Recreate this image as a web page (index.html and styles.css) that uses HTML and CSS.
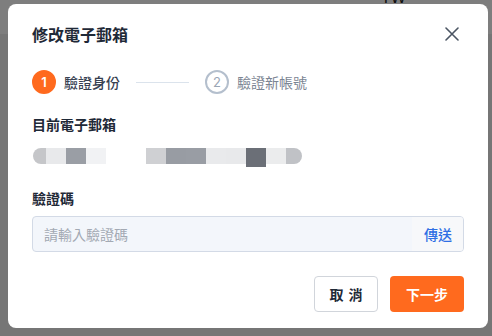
FILE: index.html
```html
<!DOCTYPE html>
<html lang="zh-Hant">
<head>
<meta charset="utf-8">
<link rel="stylesheet" href="styles.css">
</head>
<body>
<div class="page">
  <div class="page-header"><span class="page-tw">TW</span></div>
  <div class="page-rest"></div>
</div>
<div class="overlay">
  <div class="modal">
    <div class="modal-header">
      <h2 class="modal-title">修改電子郵箱</h2>
      <button class="close-btn" aria-label="close">
        <svg width="14" height="14" viewBox="0 0 14 14"><path d="M1 1L13 13M13 1L1 13" stroke="#4b5563" stroke-width="1.6" stroke-linecap="round"/></svg>
      </button>
    </div>
    <div class="modal-body">
      <div class="steps">
        <div class="step active"><span class="step-num">1</span><span class="step-text">驗證身份</span></div>
        <div class="step-line"></div>
        <div class="step"><span class="step-num">2</span><span class="step-text">驗證新帳號</span></div>
      </div>
      <div class="label first">目前電子郵箱</div>
      <div class="masked">
        <span class="b b1"></span><span class="b b2"></span><span class="b b3"></span><span class="b b4"></span><span class="gap"></span><span class="b b5"></span><span class="b b6"></span><span class="b b7"></span><span class="b b8"></span><span class="b b9"></span><span class="b b10"></span><span class="b b11"></span><span class="b b12"></span>
      </div>
      <div class="label second">驗證碼</div>
      <div class="input">
        <span class="placeholder">請輸入驗證碼</span>
        <span class="suffix">傳送</span>
      </div>
    </div>
    <div class="modal-footer">
      <button class="btn btn-default">取 消</button>
      <button class="btn btn-primary">下一步</button>
    </div>
  </div>
</div>
</body>
</html>
```
FILE: styles.css
```css
* { box-sizing: border-box; }
html, body { margin: 0; padding: 0; }
body {
  width: 492px;
  height: 336px;
  overflow: hidden;
  font-family: "Noto Sans CJK TC", "Noto Sans", sans-serif;
  position: relative;
}
.page { width: 492px; height: 336px; display: flex; flex-direction: column; }
.page-header { height: 34px; background: #fdfdfd; position: relative; }
.page-tw { position: absolute; left: 381px; top: -10px; font-size: 16px; line-height: 16px; font-family: "Liberation Sans", sans-serif; color: #222; }
.page-rest { flex: 1; background: #ededed; }
.overlay {
  position: absolute;
  inset: 0;
  background: rgba(0, 0, 0, 0.5);
  padding: 4px 4px 0 8px;
}
.modal {
  width: 480px;
  height: 324px;
  background: #fff;
  border-radius: 8px;
  display: flex;
  flex-direction: column;
}
.modal-header {
  height: 60px;
  padding: 0 24px;
  display: flex;
  align-items: center;
  justify-content: space-between;
}
.modal-title {
  margin: 0;
  font-size: 16px;
  font-weight: 700;
  color: #1f2937;
  line-height: 24px;
}
.close-btn {
  width: 24px; height: 24px;
  border: 0; background: none; padding: 0;
  display: flex; align-items: center; justify-content: center;
}
.modal-body { padding: 0 24px; display: flex; flex-direction: column; }
.steps { display: flex; align-items: center; height: 24px; margin-top: 6px; }
.step { display: flex; align-items: center; gap: 8px; }
.step-num {
  width: 24px; height: 24px; border-radius: 50%;
  display: flex; align-items: center; justify-content: center;
  font-family: "Inter", "Noto Sans", sans-serif;
  font-size: 13px;
  border: 2px solid #b4bfcd;
  color: #9aa6b5;
}
.step.active .step-num { background: #ff6a1e; border-color: #ff6a1e; color: #fff; font-weight: 600; }
.step-text { font-size: 14px; color: #7b8593; line-height: 22px; }
.step.active .step-text { color: #374151; font-weight: 500; }
.step-line { width: 53px; height: 1px; background: #dbe3ec; margin: 0 16px; }
.label { font-size: 14px; font-weight: 700; color: #1f2937; line-height: 22px; }
.label.first { margin-top: 19px; }
.label.second { margin-top: 23px; }
.masked { display: flex; height: 16px; margin-top: 13px; padding-left: 1px; }
.b { width: 20px; height: 16px; }
.b1 { width: 13px; background: #c5c6c9; border-radius: 8px 0 0 8px; }
.b2 { background: #e8e9eb; }
.b3 { background: #9a9ea5; }
.b4 { background: #f1f2f4; }
.gap { width: 40px; }
.b5 { background: #cfd0d3; }
.b6 { background: #989ca3; }
.b7 { background: #999da4; }
.b8 { background: #e9eaec; }
.b9 { background: #e8e9eb; }
.b10 { background: #6b6f77; height: 19px; }
.b11 { background: #ebeced; }
.b12 { width: 16px; background: #c0c2c6; border-radius: 0 8px 8px 0; }
.input {
  margin-top: 7px;
  height: 36px;
  border: 1px solid #d3dae6;
  border-radius: 4px;
  background: #f3f6fb;
  display: flex;
  align-items: center;
  overflow: hidden;
}
.placeholder { flex: 1; padding-left: 11px; font-size: 14px; color: #a3a9b3; }
.suffix {
  height: 100%;
  display: flex; align-items: center;
  padding: 0 11px 0 12px;
  background: #f7f8fa;
  color: #2f6fe4;
  font-size: 14px;
  font-weight: 500;
}
.modal-footer {
  margin-top: 24px;
  padding: 0 24px;
  display: flex;
  justify-content: flex-end;
  gap: 12px;
}
.btn {
  height: 36px;
  border-radius: 4px;
  font-family: "Noto Sans CJK TC", sans-serif;
  font-size: 14px;
  font-weight: 700;
  padding: 0;
}
.btn-default { width: 64px; background: #fff; border: 1px solid #d1d5db; color: #1f2937; word-spacing: 2px; }
.btn-primary { width: 74px; background: #ff6a1e; border: 0; color: #fff; }
```
